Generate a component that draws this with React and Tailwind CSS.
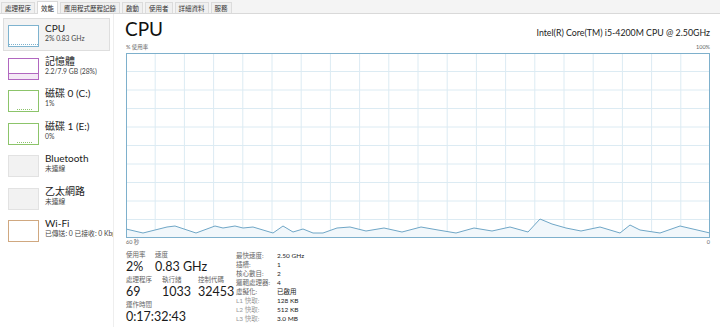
import React from "react";

const font = { fontFamily: 'Lato, "Noto Sans CJK TC", sans-serif' };

const tabs = ["處理程序", "效能", "應用程式歷程記錄", "啟動", "使用者", "詳細資料", "服務"];

const items = [
  { name: "CPU", sub: "2% 0.83 GHz", kind: "cpu", selected: true },
  { name: "記憶體", sub: "2.2/7.9 GB (28%)", kind: "mem" },
  { name: "磁碟 0 (C:)", sub: "1%", kind: "disk" },
  { name: "磁碟 1 (E:)", sub: "0%", kind: "disk" },
  { name: "Bluetooth", sub: "未連線", kind: "off" },
  { name: "乙太網路", sub: "未連線", kind: "off" },
  { name: "Wi-Fi", sub: "已傳送: 0 已接收: 0 Kbps", kind: "wifi" },
];

const pts = [
  [0, 228], [17, 232], [41, 226], [49, 225], [70, 232], [89, 225], [97, 227],
  [109, 225], [117, 227], [127, 226], [147, 232], [157, 225], [167, 231],
  [177, 228], [187, 232], [197, 232], [211, 227], [224, 226], [240, 230],
  [258, 227], [276, 231], [295, 226], [312, 229], [330, 232], [348, 227],
  [366, 230], [384, 226], [402, 231], [414, 218], [426, 223], [440, 227],
  [455, 230], [474, 226], [494, 232], [504, 224], [514, 229], [534, 232],
  [554, 225], [584, 232],
].map(([x, y]) => [x, y - 52]);

function Thumb({ kind }) {
  if (kind === "cpu")
    return (
      <div className="w-[31px] h-[22px] border border-[#7eb3cf] bg-white relative">
        <div className="absolute left-0 right-0 bottom-[1px] border-b border-dotted border-[#7eb3cf]" />
      </div>
    );
  if (kind === "mem")
    return (
      <div className="w-[31px] h-[22px] border border-[#b167c0] bg-white flex flex-col justify-end">
        <div className="h-[6px] border-t border-[#b167c0] bg-[#f4e9f6]" />
      </div>
    );
  if (kind === "disk")
    return (
      <div className="w-[31px] h-[22px] border border-[#8cc46a] bg-white relative">
        <div className="absolute left-[8px] right-[6px] bottom-[1px] border-b border-dotted border-[#8cc46a]" />
      </div>
    );
  if (kind === "wifi")
    return <div className="w-[31px] h-[22px] border border-[#d0a880] bg-white" />;
  return <div className="w-[31px] h-[22px] border border-[#e2e2e2] bg-[#f2f2f2]" />;
}

function Graph() {
  const w = 584;
  const h = 185;
  const line = pts.map(([x, y]) => `${x},${y}`).join(" ");
  const area = `0,${h} ${line} ${w},${h}`;
  return (
    <svg width={w} height={h} className="block">
      <rect x="0" y="0" width={w} height={h} fill="#fff" />
      {Array.from({ length: 19 }, (_, i) => (
        <line key={"v" + i} x1={(i + 1) * (w / 20)} x2={(i + 1) * (w / 20)} y1="0" y2={h} stroke="#dcebf3" strokeWidth="1" />
      ))}
      {Array.from({ length: 9 }, (_, i) => (
        <line key={"h" + i} y1={(i + 1) * (h / 10)} y2={(i + 1) * (h / 10)} x1="0" x2={w} stroke="#dcebf3" strokeWidth="1" />
      ))}
      <polygon points={area} fill="#f1f7fb" />
      <polyline points={line} fill="none" stroke="#6fa6c6" strokeWidth="1" />
      <rect x="0.5" y="0.5" width={w - 1} height={h - 1} fill="none" stroke="#7eb0cc" strokeWidth="1" />
    </svg>
  );
}

const specs = [
  ["最快速度:", "2.50 GHz"],
  ["插槽:", "1"],
  ["核心數目:", "2"],
  ["邏輯處理器:", "4"],
  ["虛擬化:", "已啟用"],
  ["L1 快取:", "128 KB", true],
  ["L2 快取:", "512 KB", true],
  ["L3 快取:", "3.0 MB", true],
];

function Stat({ label, value, w }) {
  return (
    <div className={w}>
      <div className="text-[6.5px] leading-[9px] text-[#666]">{label}</div>
      <div className="text-[12.5px] leading-[16px] whitespace-nowrap">{value}</div>
    </div>
  );
}

export default function App() {
  return (
    <div className="w-[720px] h-[327px] bg-white overflow-hidden text-[#1a1a1a]" style={font}>
      <div className="h-[14px] flex items-end gap-[2px] pl-[1px] border-b border-[#d9d9d9] bg-[#f4f4f4]">
        {tabs.map((t) => (
          <div
            key={t}
            className={
              t === "效能"
                ? "h-[13px] px-[3px] text-[6.5px] leading-[13px] bg-white border border-b-0 border-[#d9d9d9] -mb-px"
                : "h-[11px] px-[3px] text-[6.5px] leading-[11px] bg-[#f0f0f0] border border-b-0 border-[#dcdcdc] text-[#333]"
            }
          >
            {t}
          </div>
        ))}
      </div>

      <div className="flex">
        <div className="w-[114px] pt-[4px] pl-[3px] border-r border-[#eeeeee] h-[313px] overflow-hidden">
          {items.map((it) => (
            <div
              key={it.name}
              className={
                "h-[32.5px] w-[107px] flex items-start pl-[4px] " +
                (it.selected ? "bg-[#f3f3f3] border border-[#dedede]" : "border border-transparent")
              }
            >
              <div className="mt-[6px] shrink-0">
                <Thumb kind={it.kind} />
              </div>
              <div className="ml-[6px] mt-[3px] whitespace-nowrap">
                <div className="text-[10px] leading-[12px] text-[#222]">{it.name}</div>
                <div className="text-[6.8px] leading-[9px] text-[#444]">{it.sub}</div>
              </div>
            </div>
          ))}
        </div>

        <div className="flex-1 pl-[12px] pr-[10px]">
          <div className="flex items-end justify-between h-[26px]">
            <div className="text-[19px] leading-[22px] text-[#111] -ml-[1px]">CPU</div>
            <div className="text-[8.8px] leading-[12px] text-[#222] mb-[1px]">Intel(R) Core(TM) i5-4200M CPU @ 2.50GHz</div>
          </div>
          <div className="flex justify-between text-[5.5px] leading-[12px] text-[#666] mt-[1px]">
            <span>% 使用率</span>
            <span>100%</span>
          </div>
          <Graph />
          <div className="flex justify-between text-[5.5px] leading-[9px] text-[#666]">
            <span>60 秒</span>
            <span>0</span>
          </div>

          <div className="flex mt-[3px]">
            <div className="w-[110px]">
              <div className="flex">
                <Stat label="使用率" value="2%" w="w-[29px]" />
                <Stat label="速度" value="0.83 GHz" />
              </div>
              <div className="flex">
                <Stat label="處理程序" value="69" w="w-[36px]" />
                <Stat label="執行緒" value="1033" w="w-[36px]" />
                <Stat label="控制代碼" value="32453" />
              </div>
              <Stat label="運作時間" value="0:17:32:43" />
            </div>
            <div className="mt-[1px]">
              {specs.map(([k, v, light]) => (
                <div key={k} className="flex h-[9px] items-center">
                  <div className={"w-[41px] text-[6.5px] " + (light ? "text-[#9a9a9a]" : "text-[#666]")}>{k}</div>
                  <div className="text-[6.5px] text-[#222]">{v}</div>
                </div>
              ))}
            </div>
          </div>
        </div>
      </div>
    </div>
  );
}
